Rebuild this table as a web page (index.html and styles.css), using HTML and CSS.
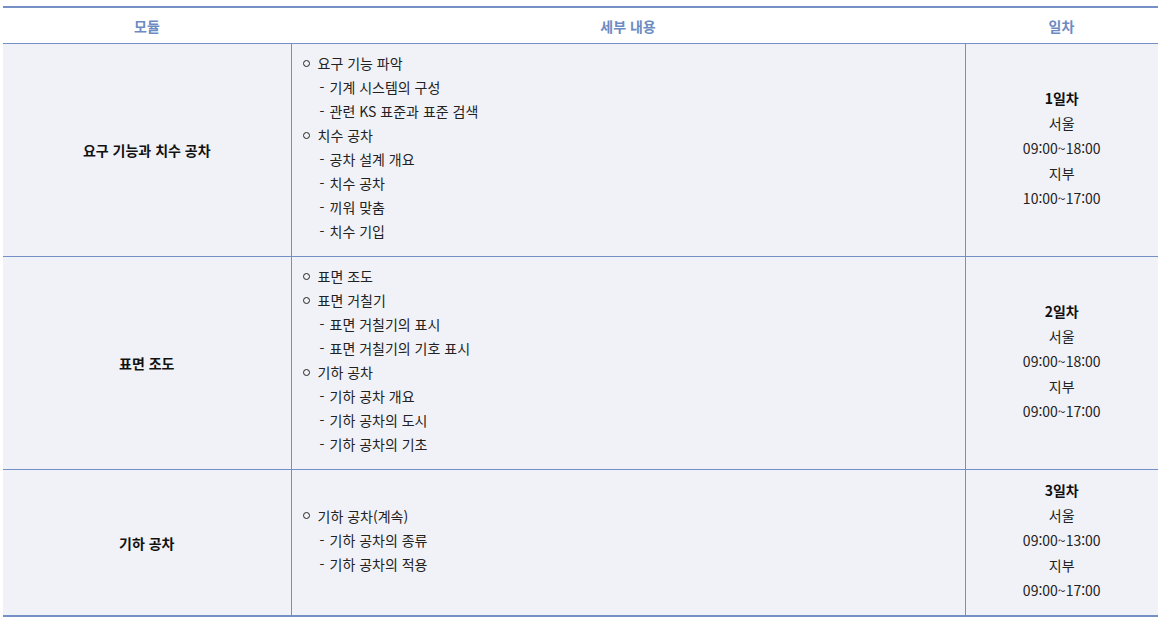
FILE: index.html
```html
<!DOCTYPE html>
<html lang="ko">
<head>
<meta charset="utf-8">
<link rel="stylesheet" href="styles.css">
</head>
<body>
<div class="wrap">
<table class="sched">
  <colgroup>
    <col class="c1"><col class="c2"><col class="c3">
  </colgroup>
  <thead>
    <tr><th>모듈</th><th>세부 내용</th><th>일차</th></tr>
  </thead>
  <tbody>
    <tr>
      <td class="mod">요구 기능과 치수 공차</td>
      <td class="detail">
        <div class="it"><span class="dot"></span>요구 기능 파악</div>
        <div class="sub"><span class="dash">-</span>기계 시스템의 구성</div>
        <div class="sub"><span class="dash">-</span>관련 KS 표준과 표준 검색</div>
        <div class="it"><span class="dot"></span>치수 공차</div>
        <div class="sub"><span class="dash">-</span>공차 설계 개요</div>
        <div class="sub"><span class="dash">-</span>치수 공차</div>
        <div class="sub"><span class="dash">-</span>끼워 맞춤</div>
        <div class="sub"><span class="dash">-</span>치수 기입</div>
      </td>
      <td class="day">
        <div class="b">1일차</div>
        <div>서울</div>
        <div>09:00~18:00</div>
        <div>지부</div>
        <div>10:00~17:00</div>
      </td>
    </tr>
    <tr>
      <td class="mod">표면 조도</td>
      <td class="detail">
        <div class="it"><span class="dot"></span>표면 조도</div>
        <div class="it"><span class="dot"></span>표면 거칠기</div>
        <div class="sub"><span class="dash">-</span>표면 거칠기의 표시</div>
        <div class="sub"><span class="dash">-</span>표면 거칠기의 기호 표시</div>
        <div class="it"><span class="dot"></span>기하 공차</div>
        <div class="sub"><span class="dash">-</span>기하 공차 개요</div>
        <div class="sub"><span class="dash">-</span>기하 공차의 도시</div>
        <div class="sub"><span class="dash">-</span>기하 공차의 기초</div>
      </td>
      <td class="day">
        <div class="b">2일차</div>
        <div>서울</div>
        <div>09:00~18:00</div>
        <div>지부</div>
        <div>09:00~17:00</div>
      </td>
    </tr>
    <tr>
      <td class="mod">기하 공차</td>
      <td class="detail">
        <div class="it"><span class="dot"></span>기하 공차(계속)</div>
        <div class="sub"><span class="dash">-</span>기하 공차의 종류</div>
        <div class="sub"><span class="dash">-</span>기하 공차의 적용</div>
      </td>
      <td class="day">
        <div class="b">3일차</div>
        <div>서울</div>
        <div>09:00~13:00</div>
        <div>지부</div>
        <div>09:00~17:00</div>
      </td>
    </tr>
  </tbody>
</table>
</div>
</body>
</html>
```

FILE: styles.css
```css
html, body {
  margin: 0;
  padding: 0;
  background: #ffffff;
}
body {
  font-family: "Noto Sans CJK KR", "Noto Sans", sans-serif;
  font-size: 14px;
  color: #222222;
}
.wrap {
  padding: 6px 7px 0 3px;
}
.sched {
  width: 1155px;
  border-collapse: collapse;
  table-layout: fixed;
  border-top: 2px solid #7590c6;
  border-bottom: 2px solid #7590c6;
}
.c1 { width: 288px; }
.c2 { width: 674px; }
.c3 { width: 193px; }
.sched th {
  height: 35px;
  padding: 0;
  background: #ffffff;
  color: #6d8bc3;
  font-weight: 700;
  font-size: 14px;
  text-align: center;
  vertical-align: middle;
  border-bottom: 1px solid #7590c6;
}
.sched td {
  background: #f1f2f8;
  border-top: 1px solid #7590c6;
  border-left: 1px solid #7590c6;
  vertical-align: middle;
  padding: 0;
}
.sched td:first-child {
  border-left: none;
}
.mod {
  text-align: center;
  font-weight: 700;
  color: #111111;
}
.detail {
  padding: 7px 10px 13px 10px !important;
  line-height: 24px;
  color: #222222;
}
.it {
  display: flex;
  align-items: center;
}
.dot {
  display: inline-block;
  width: 5px;
  height: 5px;
  border: 1.6px solid #222222;
  border-radius: 50%;
  margin: 0 8px 0 1px;
}
.sub {
  padding-left: 18px;
}
.dash {
  display: inline-block;
  width: 10px;
}
.day {
  text-align: center;
  line-height: 25px;
  padding: 8px 0 12px 0 !important;
  color: #222222;
}
.day .b {
  font-weight: 700;
  color: #111111;
}
.sched tbody tr:nth-child(1) td,
.sched tbody tr:nth-child(2) td {
  height: 192px;
}
.sched tbody tr:nth-child(3) td {
  height: 125px;
}
```
